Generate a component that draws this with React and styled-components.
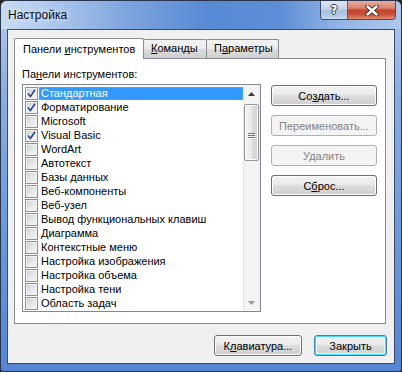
import React from 'react';
import styled, { createGlobalStyle, css } from 'styled-components';

const GlobalStyle = createGlobalStyle`
  *, *::before, *::after { box-sizing: border-box; }
  html, body { margin: 0; padding: 0; background: #2a2624; }
  body { font-family: "Liberation Sans", Arial, sans-serif; font-size: 11px; color: #000; }
`;

const Window = styled.div`
  width: 402px;
  height: 372px;
  display: flex;
  flex-direction: column;
  border: 1px solid #2a3550;
  border-radius: 7px 7px 3px 3px;
  overflow: hidden;
  background: linear-gradient(180deg, #b3cbec 0%, #8aaee0 25%, #6a97d8 65%, #5585d2 100%);
`;

const TitleBar = styled.div`
  height: 28px;
  display: flex;
  align-items: flex-start;
  padding: 0 5px 0 7px;
  background: linear-gradient(90deg, #c9dbf2 0%, #b0c9ed 12%, #7aa2dd 33%, #5889d4 52%, #5e8ed6 70%, #93b5e6 85%, #adc7ec 100%);
`;

const Title = styled.div`
  flex: 1;
  line-height: 28px;
  font-size: 12px;
  color: #0c0c0c;
  text-shadow: 0 0 6px rgba(255, 255, 255, 0.9);
`;

const Caption = styled.div`
  display: flex;
  height: 19px;
  border: 1px solid #3d4f70;
  border-top: none;
  border-radius: 0 0 4px 4px;
  overflow: hidden;
`;

const CaptionButton = styled.div`
  width: ${p => p.$w}px;
  display: flex;
  align-items: center;
  justify-content: center;
  ${p => p.$close ? css`
    background: linear-gradient(180deg, #e9ad9f 0%, #d9806c 40%, #c2432b 52%, #c9533a 75%, #e08c72 100%);
  ` : css`
    border-right: 1px solid #4e6387;
    background: linear-gradient(180deg, #dfe8f4 0%, #c3d3ea 45%, #a7bddc 52%, #b3c8e4 80%, #cfdef1 100%);
  `}
`;

const HelpGlyph = styled.span`
  font-family: "DejaVu Sans", sans-serif;
  font-weight: bold;
  font-size: 12px;
  color: #fff;
  text-shadow: 1px 0 0 #2c3d5c, -1px 0 0 #2c3d5c, 0 1px 0 #2c3d5c, 0 -1px 0 #2c3d5c;
`;

const Client = styled.div`
  flex: 1;
  margin: 0 6px 7px 6px;
  border: 1px solid #3a4b6b;
  background: #f0f0f0;
  display: flex;
  flex-direction: column;
`;

const TabControl = styled.div`
  margin: 8px 8px 0 6px;
  display: flex;
  flex-direction: column;
`;

const TabStrip = styled.div`
  display: flex;
  align-items: flex-end;
  height: 20px;
`;

const Tab = styled.div`
  width: ${p => p.$w}px;
  height: 19px;
  margin-left: -1px;
  border: 1px solid #898c95;
  border-bottom: none;
  border-radius: 2px 2px 0 0;
  padding-left: 7px;
  line-height: 17px;
  background: linear-gradient(180deg, #f3f3f3 0%, #ebebeb 50%, #dddddd 51%, #cfcfcf 100%);
  white-space: nowrap;
  ${p => p.$active && css`
    height: 21px;
    margin-left: 0;
    margin-bottom: -1px;
    position: relative;
    z-index: 1;
    background: #ffffff;
    padding-left: 8px;
    line-height: 20px;
  `}
`;

const Panel = styled.div`
  height: 266px;
  border: 1px solid #898c95;
  background: #ffffff;
  padding: 9px 0 0 7px;
`;

const Label = styled.div`
  line-height: 13px;
  margin-bottom: 3px;
`;

const Acc = styled.u`
  text-decoration: underline;
  text-underline-offset: 1px;
`;

const Content = styled.div`
  display: flex;
  gap: 10px;
`;

const ListBox = styled.div`
  width: 239px;
  height: 228px;
  border: 1px solid #828790;
  background: #fff;
  display: flex;
`;

const Items = styled.div`
  flex: 1;
  padding-top: 1px;
  overflow: hidden;
`;

const Row = styled.div`
  height: 14px;
  display: flex;
  align-items: center;
  padding-left: 2px;
  white-space: nowrap;
`;

const Box = styled.span`
  flex: none;
  width: 13px;
  height: 13px;
  border: 1px solid #8e8f8f;
  background: linear-gradient(135deg, #c9cdd3 0%, #e4e6e9 50%, #f7f7f7 100%);
  box-shadow: inset 0 0 0 1px #f2f2f2;
  display: flex;
  align-items: center;
  justify-content: center;
  margin-right: 1px;
`;

const ItemText = styled.span`
  flex: 1;
  height: 13px;
  line-height: 13px;
  padding: 0 2px;
  ${p => p.$selected && css`
    background: #3399ff;
    color: #fff;
    outline: 1px dotted #e0893a;
    outline-offset: -1px;
  `}
`;

const ScrollBar = styled.div`
  width: 17px;
  display: flex;
  flex-direction: column;
  background: linear-gradient(90deg, #e6e6e6 0%, #f4f4f4 15%, #f4f4f4 85%, #ececec 100%);
`;

const Arrow = styled.div`
  height: 17px;
  display: flex;
  align-items: center;
  justify-content: center;
`;

const Track = styled.div`
  flex: 1;
  padding-top: 2px;
`;

const Thumb = styled.div`
  height: 57px;
  margin: 0 1px;
  border: 1px solid #979797;
  border-radius: 2px;
  background: linear-gradient(90deg, #f4f4f4 0%, #e9e9e9 50%, #dadada 51%, #d6d6d6 100%);
  box-shadow: inset 0 0 0 1px #fbfbfb;
  display: flex;
  flex-direction: column;
  align-items: center;
  justify-content: center;
  gap: 1px;
  padding-top: 6px;
`;

const Grip = styled.span`
  width: 7px;
  height: 1px;
  background: #707070;
  box-shadow: 0 1px 0 #fafafa;
`;

const Buttons = styled.div`
  width: 106px;
  margin-top: 1px;
  display: flex;
  flex-direction: column;
  gap: 9px;
`;

const Button = styled.div`
  width: ${p => p.$w ? `${p.$w}px` : '100%'};
  height: 21px;
  border: 1px solid #707070;
  border-radius: 3px;
  display: flex;
  align-items: center;
  justify-content: center;
  background: linear-gradient(180deg, #f2f2f2 0%, #ebebeb 48%, #dddddd 50%, #cfcfcf 100%);
  box-shadow: inset 0 0 0 1px #fcfcfc;
  white-space: nowrap;
  ${p => p.$disabled && css`
    border-color: #adb2b5;
    background: #f4f4f4;
    box-shadow: none;
    color: #838383;
  `}
  ${p => p.$default && css`
    border-color: #3c7fb1;
    box-shadow: inset 0 0 0 1px #48d8fb, inset 0 0 0 2px #eaf6fd;
  `}
`;

const Footer = styled.div`
  display: flex;
  justify-content: flex-end;
  gap: 12px;
  padding: 11px 7px 0 0;
`;

const items = [
  ['Стандартная', true],
  ['Форматирование', true],
  ['Microsoft', false],
  ['Visual Basic', true],
  ['WordArt', false],
  ['Автотекст', false],
  ['Базы данных', false],
  ['Веб-компоненты', false],
  ['Веб-узел', false],
  ['Вывод функциональных клавиш', false],
  ['Диаграмма', false],
  ['Контекстные меню', false],
  ['Настройка изображения', false],
  ['Настройка объема', false],
  ['Настройка тени', false],
  ['Область задач', false],
];

const Check = () => (
  <svg width="9" height="9" viewBox="0 0 9 9">
    <path d="M1 4.6 L3.4 7.4 L8 0.8" fill="none" stroke="#2a4485" strokeWidth="1.6" />
  </svg>
);

const Tri = ({ down }) => (
  <svg width="7" height="4" viewBox="0 0 7 4">
    <path d={down ? 'M0 0 H7 L3.5 4 Z' : 'M0 4 H7 L3.5 0 Z'} fill={down ? '#9a9a9a' : '#3a3a3a'} />
  </svg>
);

export default function App() {
  return (
    <>
      <GlobalStyle />
      <Window>
        <TitleBar>
          <Title>Настройка</Title>
          <Caption>
            <CaptionButton $w={27}><HelpGlyph>?</HelpGlyph></CaptionButton>
            <CaptionButton $w={47} $close>
              <svg width="14" height="11" viewBox="0 0 14 11">
                <path d="M2.5 1.5 L11.5 9.5 M11.5 1.5 L2.5 9.5" stroke="#3b2520" strokeWidth="4.2" strokeLinecap="round" />
                <path d="M2.5 1.5 L11.5 9.5 M11.5 1.5 L2.5 9.5" stroke="#ffffff" strokeWidth="2.4" strokeLinecap="round" />
              </svg>
            </CaptionButton>
          </Caption>
        </TitleBar>
        <Client>
          <TabControl>
            <TabStrip>
              <Tab $w={130} $active>Панели <Acc>и</Acc>нструментов</Tab>
              <Tab $w={64}><Acc>К</Acc>оманды</Tab>
              <Tab $w={73}>П<Acc>а</Acc>раметры</Tab>
            </TabStrip>
            <Panel>
              <Label>Па<Acc>н</Acc>ели инструментов:</Label>
              <Content>
                <ListBox>
                  <Items>
                    {items.map(([name, checked], i) => (
                      <Row key={name}>
                        <Box>{checked && <Check />}</Box>
                        <ItemText $selected={i === 0}>{name}</ItemText>
                      </Row>
                    ))}
                  </Items>
                  <ScrollBar>
                    <Arrow><Tri /></Arrow>
                    <Track>
                      <Thumb><Grip /><Grip /><Grip /></Thumb>
                    </Track>
                    <Arrow><Tri down /></Arrow>
                  </ScrollBar>
                </ListBox>
                <Buttons>
                  <Button>Со<Acc>з</Acc>дать...</Button>
                  <Button $disabled>Переименовать...</Button>
                  <Button $disabled>Удалить</Button>
                  <Button>С<Acc>б</Acc>рос...</Button>
                </Buttons>
              </Content>
            </Panel>
          </TabControl>
          <Footer>
            <Button $w={88}>К<Acc>л</Acc>авиатура...</Button>
            <Button $w={73} $default>Закрыть</Button>
          </Footer>
        </Client>
      </Window>
    </>
  );
}
